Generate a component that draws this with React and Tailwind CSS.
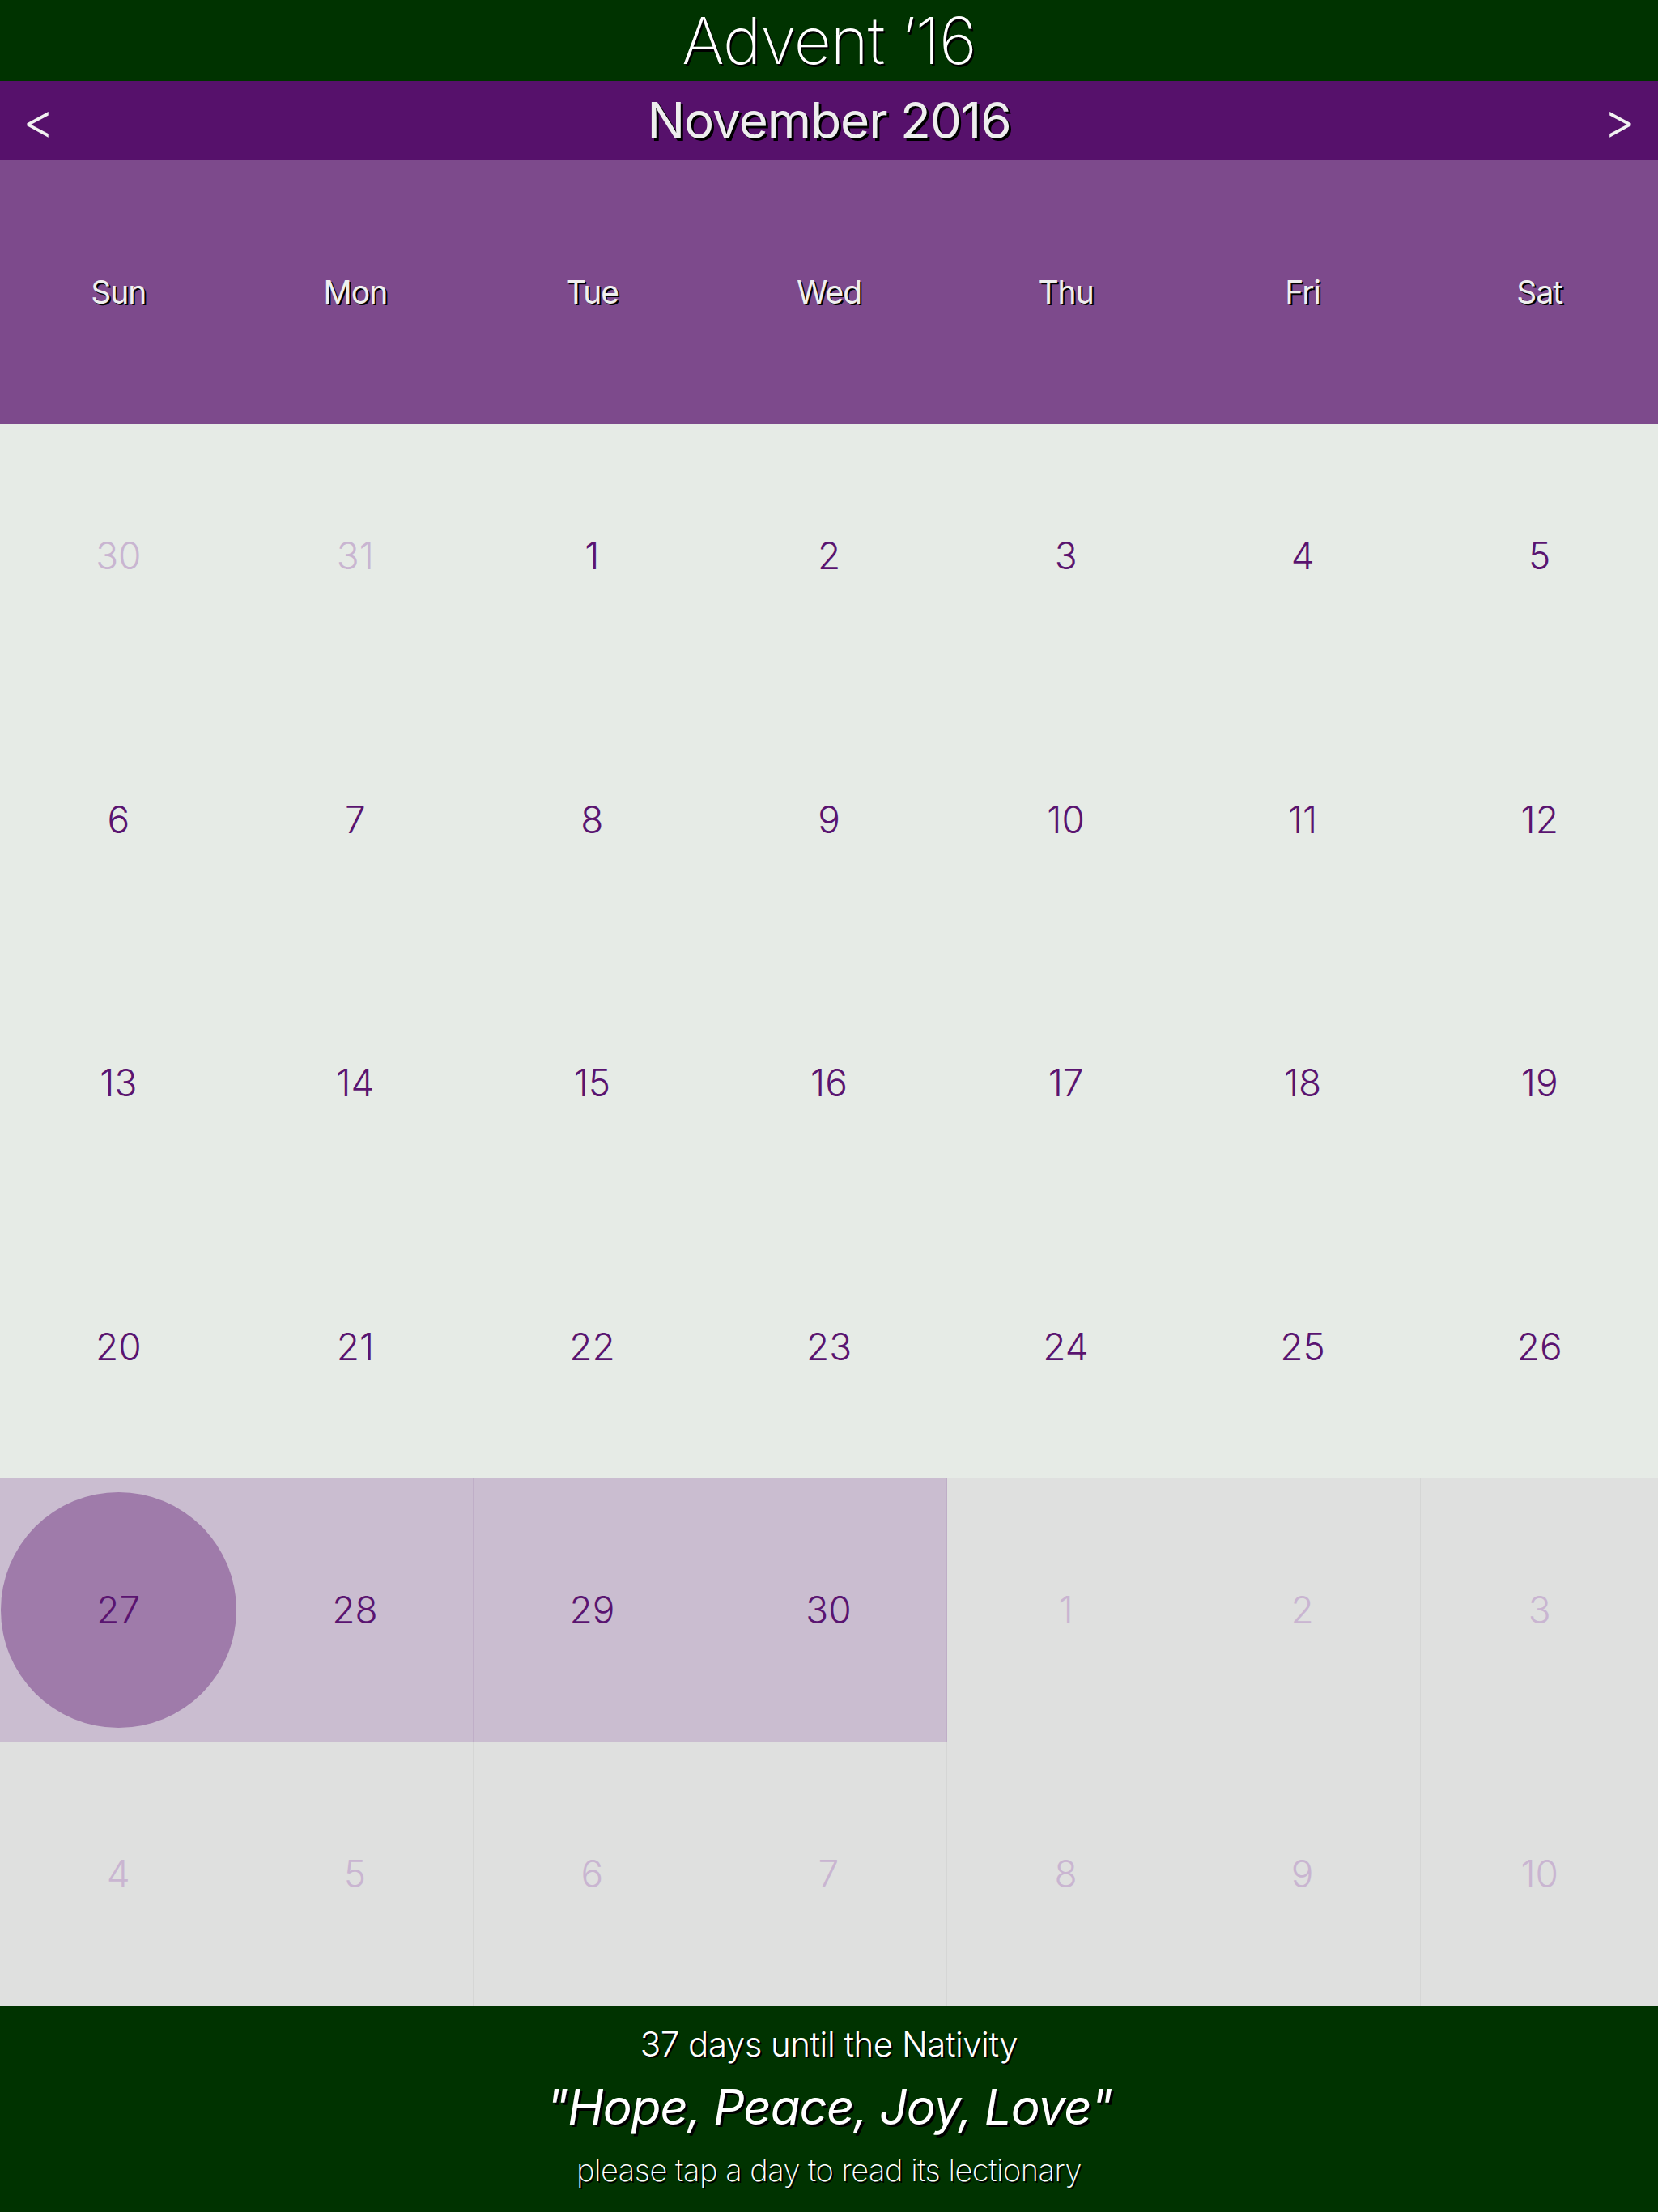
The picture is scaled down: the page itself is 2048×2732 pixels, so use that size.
const DAYS = ["Sun", "Mon", "Tue", "Wed", "Thu", "Fri", "Sat"];

// kind: prev | cur | advent | next
const WEEKS = [
  [[30, "prev"], [31, "prev"], [1, "cur"], [2, "cur"], [3, "cur"], [4, "cur"], [5, "cur"]],
  [[6, "cur"], [7, "cur"], [8, "cur"], [9, "cur"], [10, "cur"], [11, "cur"], [12, "cur"]],
  [[13, "cur"], [14, "cur"], [15, "cur"], [16, "cur"], [17, "cur"], [18, "cur"], [19, "cur"]],
  [[20, "cur"], [21, "cur"], [22, "cur"], [23, "cur"], [24, "cur"], [25, "cur"], [26, "cur"]],
  [[27, "advent", true], [28, "advent"], [29, "advent"], [30, "advent"], [1, "next"], [2, "next"], [3, "next"]],
  [[4, "next"], [5, "next"], [6, "next"], [7, "next"], [8, "next"], [9, "next"], [10, "next"]],
];

function DayCell({ day, kind, today, col, row }) {
  const shaded = kind === "advent" || kind === "next";
  const bg = kind === "advent" ? "bg-[#cabdd0]" : kind === "next" ? "bg-[#dfe0df]" : "";
  const line = kind === "advent" ? "border-[#bfaec7]" : "border-[#d5d6d5]";
  const text = kind === "prev" || kind === "next" ? "text-[#c9b5d1]" : "text-[#5a1470]";
  const borders = [
    shaded && col % 2 === 1 && col < 6 ? "border-r" : "",
    shaded && row === 4 ? "border-b" : "",
  ].join(" ");

  return (
    <div className={`flex items-center justify-center ${bg} ${line} ${borders}`}>
      {today ? (
        <div className="flex size-[291px] items-center justify-center rounded-full bg-[#9f7baa]">
          <span className={`text-[46px] font-light ${text}`}>{day}</span>
        </div>
      ) : (
        <span className={`text-[46px] font-light ${text}`}>{day}</span>
      )}
    </div>
  );
}

export default function App() {
  return (
    <div className="flex h-[2732px] w-[2048px] flex-col overflow-hidden bg-[#e6ebe6] font-[Inter,'Liberation_Sans',sans-serif]">
      <header className="flex h-[100px] items-center justify-center bg-[#003300]">
        <h1 className="text-[80px] font-extralight leading-none tracking-[-1px] text-white [text-shadow:2px_3px_0_#000]">
          Advent ’16
        </h1>
      </header>

      <div className="flex h-[98px] items-center justify-between bg-[#56116b] px-[28px]">
        <button className="text-[60px] font-light leading-none text-[#f2f2f2]">&lt;</button>
        <h2 className="text-[62px] font-normal leading-none tracking-[-1px] text-[#eeeeee] [text-shadow:3px_3px_0_#000]">
          November 2016
        </h2>
        <button className="text-[60px] font-light leading-none text-[#f2f2f2]">&gt;</button>
      </div>

      <div className="grid h-[326px] grid-cols-7 items-center bg-[#7d4a8c]">
        {DAYS.map((d) => (
          <div key={d} className="text-center text-[39px] font-normal tracking-[-1px] text-[#efefef] [text-shadow:2px_2px_0_#000]">
            {d}
          </div>
        ))}
      </div>

      <div className="grid flex-1 grid-cols-7 grid-rows-6">
        {WEEKS.map((week, r) =>
          week.map(([day, kind, today], c) => (
            <DayCell key={`${r}-${c}`} day={day} kind={kind} today={today} col={c} row={r} />
          ))
        )}
      </div>

      <footer className="flex h-[255px] flex-col items-center bg-[#003300] pt-[22px] text-white">
        <p className="text-[42px] font-light leading-[52px] tracking-[-0.5px] [text-shadow:2px_2px_0_#000]">
          37 days until the Nativity
        </p>
        <p className="mt-[18px] text-[60px] font-normal italic leading-[66px] tracking-[-1px] [text-shadow:3px_3px_0_#000]">
          "Hope, Peace, Joy, Love"
        </p>
        <p className="mt-[22px] text-[38px] font-extralight leading-[46px] tracking-[-0.5px] [text-shadow:2px_2px_0_#000]">
          please tap a day to read its lectionary
        </p>
      </footer>
    </div>
  );
}
